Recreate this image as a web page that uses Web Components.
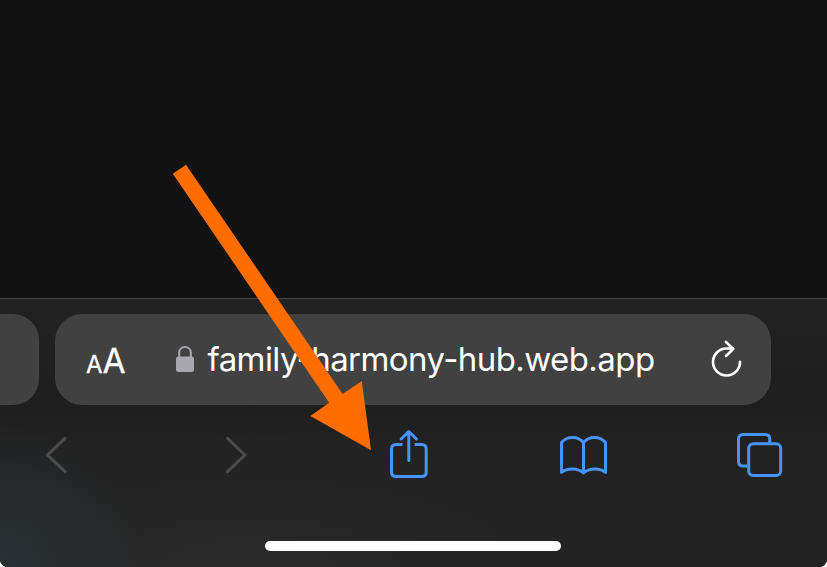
<!DOCTYPE html>
<html lang="en"><head><meta charset="utf-8"><title>Browser share hint</title>
<style>html,body{margin:0;background:#fff}</style></head>
<body><share-guide></share-guide>
<script>
const define=(name,html)=>customElements.define(name,class extends HTMLElement{
  constructor(){super();this.attachShadow({mode:'open'}).innerHTML=html;}
});
define('address-bar',`<style>
:host{display:flex;height:91px;gap:16px;overflow:hidden}
.prev{width:39px;flex:none;background:#414141;border-radius:0 26px 26px 0}
.field{width:716px;box-sizing:border-box;flex:none;display:flex;align-items:center;background:#414141;border-radius:27px;padding:0 27px 0 31px;color:#fff;font-family:Inter,"Liberation Sans",sans-serif}
.aa{display:flex;align-items:baseline;width:88px;line-height:40px;font-size:33.5px;padding-top:7px;-webkit-text-stroke:.3px #fff}
.aa small{font-size:24px}
svg{display:block;flex:none}
.url{width:501px;margin-left:11.5px;font-size:33px;line-height:40px;padding-bottom:2px;letter-spacing:-.57px;white-space:nowrap}
</style><div class="prev"></div><div class="field">
<span class="aa"><small>A</small><span>A</span></span>
<svg width="22" height="30" viewBox="174 345 22 30"><rect x="176" y="356.5" width="18" height="15.5" rx="2.5" fill="#a9a8b0"/><path d="M179.2 358v-5.4c0-7.4 11.6-7.4 11.6 0v5.4" fill="none" stroke="#a9a8b0" stroke-width="2.1"/></svg>
<span class="url">family-harmony-hub.web.app</span>
<svg width="34" height="40" viewBox="709 339.5 34 40" fill="none" stroke="#fff" stroke-width="2.6" stroke-linecap="round" stroke-linejoin="round"><path d="M740 361.2A13.5 13.5 0 1 1 726.5 348H733"/><path d="M726 341.5l7.2 7-7.2 7"/></svg>
</div>`);
define('nav-bar',`<style>
:host{display:grid;grid-template-columns:179px 166px 170px 177px 49px;height:56px;padding:0 43px;box-sizing:border-box;color:#4793fb}
svg{display:block;fill:none;stroke:currentColor;stroke-width:3;stroke-linecap:round;stroke-linejoin:round}
.off{color:#4c4c4c}
</style>
<svg class="off" width="27" height="56" viewBox="43 427 27 56"><path d="M65 438.3 47.5 455 65 471.7"/></svg>
<svg class="off" width="27" height="56" viewBox="222 427 27 56"><path d="M227.5 438.3 245 455l-17.5 16.7"/></svg>
<svg width="42" height="56" viewBox="388 427 42 56"><path d="M402.5 444.6h-6.5q-4.5 0-4.5 4.5v22.8q0 4.5 4.5 4.5h25.7q4.5 0 4.5-4.5v-22.8q0-4.5-4.5-4.5h-7" stroke-linecap="butt"/><path d="M408.8 432v28.5M401.1 439l7.7-7.5 7.7 7.5"/></svg>
<svg width="51" height="56" viewBox="558 427 51 56"><path d="M561.5 472.4V442.5C567 435.8 578 435.8 583.5 442.5C589 435.8 600 435.8 605.5 442.5V472.4C600 467.8 589 467.8 583.5 473C578 467.8 567 467.8 561.5 472.4ZM583.5 442.5V473"/></svg>
<svg width="49" height="56" viewBox="735 427 49 56"><path d="M769.8 443v-4q0-4.5-4.5-4.5h-22.3q-4.5 0-4.5 4.5v22.4q0 4.5 4.5 4.5h4" stroke-linecap="butt"/><rect x="748.7" y="443.8" width="32" height="31.8" rx="4.5"/></svg>`);
define('browser-chrome',`<style>
:host{display:block;box-sizing:border-box;height:269px;border-top:1px solid #434343;padding-top:15px;background:radial-gradient(ellipse 140px 140px at 0 100%,#2a3135,transparent),radial-gradient(ellipse 420px 140px at 250px 270px,#292929,transparent),linear-gradient(#222 0,#1e1e1e 106px,#222 145px,#222)}
nav-bar{margin-top:22px}
.home{width:296px;height:10px;border-radius:5px;background:#fff;margin:58px 0 0 265px}
</style><address-bar></address-bar><nav-bar></nav-bar><div class="home"></div>`);
define('hint-arrow',`<style>:host{position:absolute;inset:0;pointer-events:none}svg{display:block}</style>
<svg width="827" height="567"><path fill="#ff6d00" d="M186 164.7 342.6 394 361.8 381 371 450.3 310.3 416 329.2 402.8 172.8 173.8Z"/></svg>`);
define('share-guide',`<style>
:host{display:block;position:relative;width:827px;height:567px;overflow:hidden;background:#121212;border-radius:0 0 8px 8px}
.page{height:298px}
</style><div class="page"></div><browser-chrome></browser-chrome><hint-arrow></hint-arrow>`);
</script></body></html>
